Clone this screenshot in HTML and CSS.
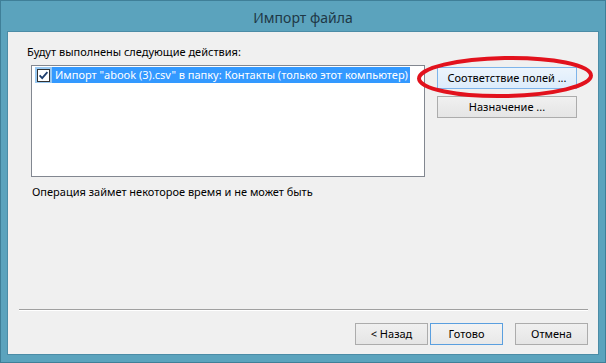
FILE: index.html
```html
<!DOCTYPE html>
<html lang="ru">
<head>
<meta charset="utf-8">
<title>Импорт файла</title>
<link rel="stylesheet" href="styles.css">
</head>
<body>
<div class="window">
  <div class="titlebar">Импорт файла</div>
  <div class="client">
    <div class="caption">Будут выполнены следующие действия:</div>
    <div class="main">
      <div class="listbox">
        <div class="item">
          <span class="check-cell">
            <svg class="checkbox" width="13" height="13" viewBox="0 0 13 13">
              <rect x="0.5" y="0.5" width="12" height="12" fill="#fff" stroke="#333"/>
              <path d="M2.6 6.4 L5.2 9.2 L10.4 3.2" fill="none" stroke="#1f3f6e" stroke-width="1.8"/>
            </svg>
          </span>
          <span class="item-label">Импорт "abook (3).csv" в папку: Контакты (только этот компьютер)</span>
        </div>
      </div>
      <div class="side">
        <button class="btn btn-wide btn-hover">Соответствие полей ...</button>
        <button class="btn btn-wide">Назначение ...</button>
      </div>
    </div>
    <div class="note">Операция займет некоторое время и не может быть</div>
    <div class="footer">
      <div class="separator"></div>
      <div class="buttons">
        <button class="btn">&lt; Назад</button>
        <button class="btn btn-default">Готово</button>
        <button class="btn btn-cancel">Отмена</button>
      </div>
    </div>
  </div>
  <svg class="mark" width="606" height="363" viewBox="0 0 606 363">
    <ellipse cx="505" cy="77" rx="86" ry="19" fill="none" stroke="#e2121d" stroke-width="4" transform="rotate(-1 505 77)"/>
  </svg>
</div>
</body>
</html>
```

FILE: styles.css
```css
* { box-sizing: border-box; }

html, body {
  margin: 0;
  padding: 0;
}

body {
  width: 606px;
  height: 363px;
  overflow: hidden;
  font-family: "Noto Sans", "Open Sans", sans-serif;
  font-size: 11px;
  color: #000;
}

.window {
  position: relative;
  width: 606px;
  height: 363px;
  background: #5ba3bd;
  border: 1px solid #3f7f98;
  display: flex;
  flex-direction: column;
}

.titlebar {
  height: 30px;
  flex: none;
  display: flex;
  align-items: center;
  justify-content: center;
  font-size: 14px;
  color: #1f3846;
  padding-top: 2px;
}

.client {
  flex: 1;
  margin: 0 6px 7px 6px;
  border: 1px solid #4b8ca6;
  background: #f0f0f0;
  display: flex;
  flex-direction: column;
  padding: 12px 10px 9px 11px;
}

.caption {
  line-height: 16px;
  margin-left: 8px;
  white-space: nowrap;
}

.main {
  display: flex;
  margin-top: 5px;
  margin-left: 12px;
}

.listbox {
  width: 394px;
  height: 112px;
  border: 1px solid #828790;
  background: #fff;
  padding: 1px 3px;
}

.item {
  display: flex;
  height: 16px;
}

.check-cell {
  width: 17px;
  height: 16px;
  background: #99c9f2;
  display: flex;
  align-items: center;
  justify-content: center;
}

.checkbox { display: block; }

.item-label {
  background: #3399ff;
  color: #fff;
  line-height: 16px;
  padding: 0 3px;
  width: 358px;
  white-space: nowrap;
  overflow: hidden;
}

.side {
  display: flex;
  flex-direction: column;
  gap: 7px;
  margin-left: 12px;
  margin-top: 2px;
}

.btn {
  font-family: inherit;
  font-size: 11px;
  color: #000;
  height: 22px;
  width: 73px;
  padding: 0;
  border: 1px solid #acacac;
  background: linear-gradient(#f0f0f0, #e5e5e5);
  border-radius: 0;
  line-height: 20px;
}

.btn-wide { width: 140px; }

.btn-hover {
  border-color: #7eb4ea;
  background: linear-gradient(#ecf4fc, #dcecfc);
}

.btn-default {
  border-color: #5a9fdf;
  background: linear-gradient(#f3f3f3, #e8e8e8);
}

.note {
  margin-top: 7px;
  margin-left: 13px;
  line-height: 16px;
  white-space: nowrap;
}

.footer {
  margin-top: auto;
}

.separator {
  height: 2px;
  border-top: 1px solid #a0a0a0;
  border-bottom: 1px solid #fff;
}

.buttons {
  display: flex;
  justify-content: flex-end;
  gap: 2px;
  margin-top: 12px;
}

.btn-cancel { margin-left: 10px; }

.mark {
  position: absolute;
  left: -1px;
  top: -1px;
  pointer-events: none;
}
```
